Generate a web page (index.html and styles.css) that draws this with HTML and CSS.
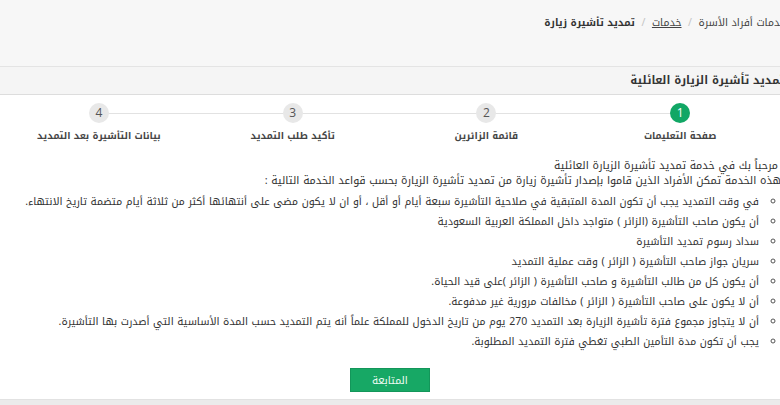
FILE: index.html
```html
<!DOCTYPE html>
<html lang="ar" dir="rtl">
<head>
<meta charset="utf-8">
<link rel="stylesheet" href="styles.css">
</head>
<body>
<div class="page">
  <div class="topband">
    <div class="breadcrumb">
      <span class="crumb">خدمات أفراد الأسرة</span>
      <span class="sep">/</span>
      <a class="crumb link">خدمات</a>
      <span class="sep">/</span>
      <span class="crumb current">تمديد تأشيرة زيارة</span>
    </div>
  </div>
  <div class="panel-head">تمديد تأشيرة الزيارة العائلية</div>
  <div class="steps">
    <div class="step active"><span class="num">1</span><span class="label">صفحة التعليمات</span></div>
    <div class="step"><span class="num">2</span><span class="label">قائمة الزائرين</span></div>
    <div class="step"><span class="num">3</span><span class="label">تأكيد طلب التمديد</span></div>
    <div class="step"><span class="num">4</span><span class="label">بيانات التأشيرة بعد التمديد</span></div>
  </div>
  <div class="content">
    <p class="intro">مرحباً بك في خدمة تمديد تأشيرة الزيارة العائلية</p>
    <p class="intro wide">هذه الخدمة تمكن الأفراد الذين قاموا بإصدار تأشيرة زيارة من تمديد تأشيرة الزيارة بحسب قواعد الخدمة التالية :</p>
    <ul class="rules">
      <li>في وقت التمديد يجب أن تكون المدة المتبقية في صلاحية التأشيرة سبعة أيام أو أقل ، أو ان لا يكون مضى على أنتهائها أكثر من ثلاثة أيام متضمة تاريخ الانتهاء.</li>
      <li>أن يكون صاحب التأشيرة (الزائر ) متواجد داخل المملكة العربية السعودية</li>
      <li>سداد رسوم تمديد التأشيرة</li>
      <li>سريان جواز صاحب التأشيرة ( الزائر ) وقت عملية التمديد</li>
      <li>أن يكون كل من طالب التأشيرة و صاحب التأشيرة ( الزائر )على قيد الحياة.</li>
      <li>أن لا يكون على صاحب التأشيرة ( الزائر ) مخالفات مرورية غير مدفوعة.</li>
      <li>أن لا يتجاوز مجموع فترة تأشيرة الزيارة بعد التمديد 270 يوم من تاريخ الدخول للمملكة علماً أنه يتم التمديد حسب المدة الأساسية التي أصدرت بها التأشيرة.</li>
      <li>يجب أن تكون مدة التأمين الطبي تغطي فترة التمديد المطلوبة.</li>
    </ul>
    <div class="actions"><button class="btn">المتابعة</button></div>
  </div>
  <div class="footer-strip"></div>
</div>
</body>
</html>
```
FILE: styles.css
```css
html, body {
  margin: 0;
  padding: 0;
  background: #ffffff;
  overflow: hidden;
}
body {
  font-family: "Noto Kufi Arabic", "Droid Arabic Kufi", "DejaVu Sans", sans-serif;
  color: #333333;
  font-size: 12px;
}
.page {
  width: 780px;
  height: 405px;
  display: flex;
  flex-direction: column;
}
.topband {
  background: #f7f7f7;
  border-bottom: 1px solid #e4e4e4;
  box-sizing: border-box;
  height: 67px;
}
.breadcrumb {
  margin-right: -6px;
  padding-top: 15px;
  font-size: 10.5px;
  line-height: 16px;
  color: #444;
  white-space: nowrap;
}
.sep {
  color: #c4c4c4;
  margin: 0 3px;
}
.link {
  color: #444;
  text-decoration: underline;
}
.current {
  font-weight: bold;
  font-size: 10px;
  color: #333;
}
.panel-head {
  height: 28px;
  box-sizing: border-box;
  background: #f5f5f5;
  border-bottom: 1px solid #dddddd;
  font-weight: bold;
  font-size: 11.2px;
  line-height: 27px;
  margin-right: -4px;
  white-space: nowrap;
  color: #333;
}
.steps {
  display: grid;
  grid-template-columns: repeat(4, 1fr);
  margin: 8px 3px 0 2px;
  position: relative;
}
.steps::before {
  content: "";
  position: absolute;
  top: 10px;
  left: 12.5%;
  right: 12.5%;
  height: 1px;
  background: #e2e2e2;
}
.step {
  display: flex;
  flex-direction: column;
  align-items: center;
  position: relative;
}
.num {
  width: 20px;
  height: 20px;
  border-radius: 50%;
  background: #e8e8e8;
  color: #555;
  font-family: "Open Sans", "DejaVu Sans", sans-serif;
  font-size: 12px;
  line-height: 20px;
  text-align: center;
}
.step.active .num {
  background: #11a765;
  color: #fff;
}
.label {
  margin-top: 5px;
  font-weight: bold;
  font-size: 9.5px;
  line-height: 16px;
  color: #444;
  white-space: nowrap;
}
.content {
  margin-top: 14px;
  padding-right: 2px;
  flex: 1;
}
.intro {
  margin: 0;
  line-height: 15px;
  white-space: nowrap;
  font-size: 10.8px;
}
.intro.wide {
  margin-right: -3px;
}
.rules {
  list-style: circle;
  margin: 4px 0 0 0;
  padding-right: 18px;
  font-size: 10.5px;
}
.rules li {
  line-height: 20px;
  white-space: nowrap;
  padding-right: 1px;
}
.rules li::marker {
  color: #555;
  font-size: 9px;
}
.actions {
  display: flex;
  justify-content: center;
  margin-top: 16px;
  padding-left: 2px;
}
.btn {
  width: 80px;
  height: 24px;
  background: #17a865;
  border: 1px solid #13965a;
  color: #eefaf3;
  font-family: inherit;
  font-size: 10.5px;
  padding: 0;
  cursor: pointer;
}
.footer-strip {
  height: 5px;
  background: #ebebeb;
  border-top: 1px solid #e2e2e2;
}
```
